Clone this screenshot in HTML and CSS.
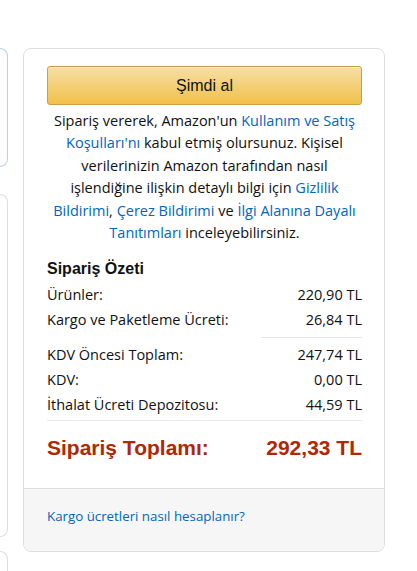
FILE: index.html
```html
<!DOCTYPE html>
<html lang="tr">
<head>
<meta charset="utf-8">
<link rel="stylesheet" href="styles.css">
</head>
<body>
<div class="page">
  <div class="side">
    <div class="side-card side-card-blue"></div>
    <div class="side-card side-card-2"></div>
    <div class="side-card side-card-3"></div>
  </div>
  <div class="card">
    <div class="card-body">
      <button class="buy">Şimdi al</button>
      <p class="legal">Sipariş vererek, Amazon'un <a>Kullanım ve Satış Koşulları'nı</a> kabul etmiş olursunuz. Kişisel verilerinizin Amazon tarafından nasıl işlendiğine ilişkin detaylı bilgi için <a>Gizlilik Bildirimi</a>, <a>Çerez Bildirimi</a> ve <a>İlgi Alanına Dayalı Tanıtımları</a> inceleyebilirsiniz.</p>
      <h3 class="summary-title">Sipariş Özeti</h3>
      <div class="row"><span>Ürünler:</span><span>220,90 TL</span></div>
      <div class="row"><span>Kargo ve Paketleme Ücreti:</span><span>26,84 TL</span></div>
      <div class="subrule"></div>
      <div class="row"><span>KDV Öncesi Toplam:</span><span>247,74 TL</span></div>
      <div class="row"><span>KDV:</span><span>0,00 TL</span></div>
      <div class="row"><span>İthalat Ücreti Depozitosu:</span><span>44,59 TL</span></div>
      <div class="rule"></div>
      <div class="total"><span>Sipariş Toplamı:</span><span>292,33 TL</span></div>
    </div>
    <div class="card-foot">
      <a>Kargo ücretleri nasıl hesaplanır?</a>
    </div>
  </div>
</div>
</body>
</html>
```

FILE: styles.css
```css
html, body {
  margin: 0;
  padding: 0;
  background: #fff;
}
body {
  font-family: "Open Sans", "Noto Sans", Arial, sans-serif;
  color: #111;
  width: 417px;
  height: 571px;
  overflow: hidden;
}
.page {
  display: flex;
  align-items: flex-start;
  gap: 15px;
}
.side {
  width: 8px;
  display: flex;
  flex-direction: column;
}
.side-card {
  border: 1px solid #ddd;
  border-left: none;
  border-radius: 0 8px 8px 0;
  background: #fff;
}
.side-card-blue {
  margin-top: 48px;
  height: 117px;
  border-color: #b7d3de;
  background: #fdfdfd;
}
.side-card-2 {
  margin-top: 27px;
  height: 341px;
}
.side-card-3 {
  margin-top: 14px;
  height: 40px;
  border-radius: 0 8px 0 0;
}
.card {
  margin-top: 48px;
  width: 360px;
  border: 1px solid #dddddd;
  border-radius: 8px;
  overflow: hidden;
}
.card-body {
  padding: 17px 22px 28px 23px;
}
.buy {
  display: block;
  width: 100%;
  height: 39px;
  margin: 0;
  border: 1px solid #c89e46;
  border-radius: 3px;
  background: linear-gradient(to bottom, #f7dfa5, #f0c14b);
  box-shadow: inset 0 1px 0 rgba(255,255,255,0.4);
  font-family: "Liberation Sans", Arial, sans-serif;
  font-size: 16px;
  color: #111;
  padding: 0;
}
.legal {
  margin: 5px 0 0;
  text-align: center;
  font-size: 14.5px;
  line-height: 22.4px;
  color: #111;
}
.legal a, .card-foot a {
  color: #0066c0;
  text-decoration: none;
}
.summary-title {
  margin: 15px 0 3px;
  font-family: "Liberation Sans", Arial, sans-serif;
  font-weight: bold;
  font-size: 16px;
  line-height: 20px;
  color: #111;
}
.row {
  display: flex;
  justify-content: space-between;
  font-size: 14.5px;
  line-height: 25px;
  color: #111;
}
.subrule {
  margin: 5px 0 4px auto;
  width: 101px;
  border-top: 1px solid #e7e7e7;
}
.rule {
  margin-top: 3px;
  border-top: 1px solid #e7e7e7;
}
.total {
  display: flex;
  justify-content: space-between;
  margin-top: 15px;
  font-family: "Liberation Sans", Arial, sans-serif;
  font-weight: bold;
  font-size: 21px;
  line-height: 24px;
  color: #b12704;
}
.card-foot {
  border-top: 1px solid #dddddd;
  background: #f6f6f6;
  padding: 17px 23px 25px;
  font-size: 13.3px;
  line-height: 20px;
}
```
